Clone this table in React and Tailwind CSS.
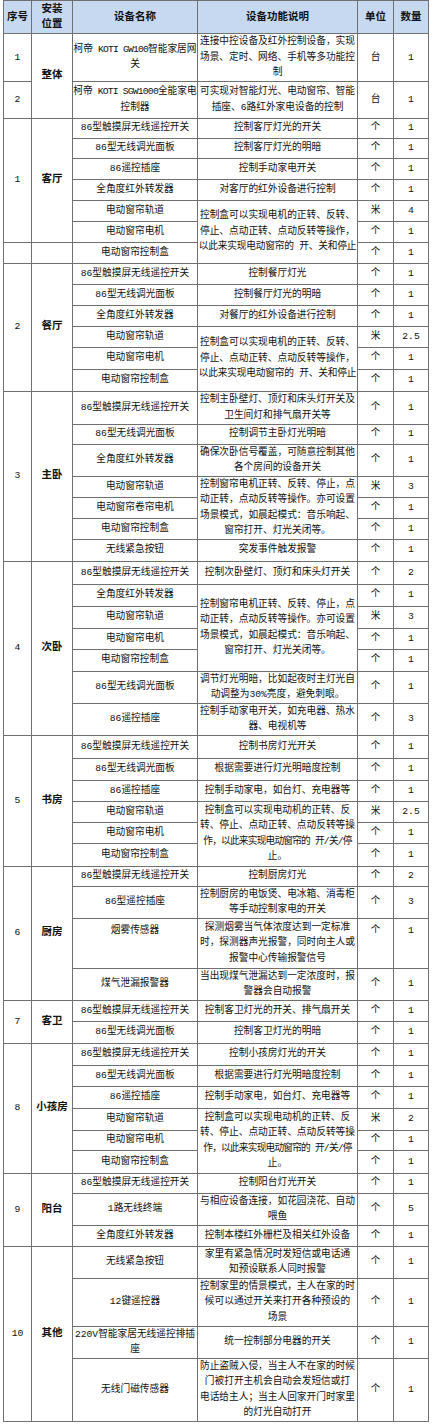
import React from 'react'

// 智能家居设备清单
const td = 'border border-[#707070] p-0 text-center align-middle whitespace-nowrap'

const KOTI1 = <>柯帝<span className="tracking-[-0.8px]"> KOTI GW100</span>智能家居网</>
const KOTI2 = <>柯帝<span className="tracking-[-0.8px]"> KOTI SGW1000</span>全能家电</>

const curtainA = [
  '控制盒可以实现电机的正转、反转、',
  '停止、点动正转、点动反转等操作，',
  <span className="tracking-[-0.2px]">以此来实现电动窗帘的 开、关和停止</span>
]
const curtainB = [
  '控制窗帘电机正转、反转、停止，点',
  '动正转，点动反转等操作。亦可设置',
  '场景模式，如晨起模式：音乐响起、',
  '窗帘打开、灯光关闭等。'
]
const curtainC = [
  '控制盒可以实现电动机的正转、反',
  '转、停止、点动正转、点动反转等操',
  <span className="tracking-[-0.8px]">作，以此来实现电动窗帘的 开/关/停</span>,
  '止。'
]

const rows = [
  // 整体
  { h: 47, seq: ['1'], loc: ['整体', 2], name: [KOTI1, '关'], desc: [['连接中控设备及红外控制设备，实现', '场景、定时、网络、手机等多功能控', '制']], u: '台' },
  { h: 37, seq: ['2'], name: [KOTI2, '控制器'], desc: [['可实现对智能灯光、电动窗帘、智能', '插座、6路红外家电设备的控制']], u: '台' },
  // 客厅
  { h: 20, seq: ['1', 6], loc: ['客厅', 6], name: ['86型触摸屏无线遥控开关'], desc: [['控制客厅灯光的开关']] },
  { h: 20, name: ['86型无线调光面板'], desc: [['控制客厅灯光的明暗']] },
  { h: 21, name: ['86遥控插座'], desc: [['控制手动家电开关']] },
  { h: 21, name: ['全角度红外转发器'], desc: [['对客厅的红外设备进行控制']] },
  { h: 21, name: ['电动窗帘轨道'], desc: [curtainA, 3], u: '米', q: '4' },
  { h: 21, name: ['电动窗帘电机'] },
  { h: 21, seq: [''], loc: [''], name: ['电动窗帘控制盒'] },
  // 餐厅
  { h: 21, seq: ['2', 6], loc: ['餐厅', 6], name: ['86型触摸屏无线遥控开关'], desc: [['控制餐厅灯光']] },
  { h: 21, name: ['86型无线调光面板'], desc: [['控制餐厅灯光的明暗']] },
  { h: 21, name: ['全角度红外转发器'], desc: [['对餐厅的红外设备进行控制']] },
  { h: 21, name: ['电动窗帘轨道'], desc: [curtainA, 3], u: '米', q: '2.5' },
  { h: 22, name: ['电动窗帘电机'] },
  { h: 22, name: ['电动窗帘控制盒'] },
  // 主卧
  { h: 33, seq: ['3', 7], loc: ['主卧', 7], name: ['86型触摸屏无线遥控开关'], desc: [['控制主卧壁灯、顶灯和床头灯开关及', '卫生间灯和排气扇开关等']] },
  { h: 20, name: ['86型无线调光面板'], desc: [['控制调节主卧灯光明暗']] },
  { h: 32, name: ['全角度红外转发器'], desc: [['确保次卧信号覆盖，可随意控制其他', '各个房间的设备开关']] },
  { h: 21, name: ['电动窗帘轨道'], desc: [curtainB, 3], u: '米', q: '3' },
  { h: 21, name: ['电动窗帘卷帘电机'] },
  { h: 21, name: ['电动窗帘控制盒'] },
  { h: 22, name: ['无线紧急按钮'], desc: [['突发事件触发报警']] },
  // 次卧
  { h: 23, seq: ['4', 7], loc: ['次卧', 7], name: ['86型触摸屏无线遥控开关'], desc: [['控制次卧壁灯、顶灯和床头灯开关']], q: '2' },
  { h: 22, name: ['全角度红外转发器'], desc: [curtainB, 4] },
  { h: 22, name: ['电动窗帘轨道'], u: '米', q: '3' },
  { h: 21, name: ['电动窗帘电机'] },
  { h: 22, name: ['电动窗帘控制盒'] },
  { h: 32, name: ['86型无线调光面板'], desc: [['调节灯光明暗，比如起夜时主灯光自', '动调整为30%亮度，避免刺眼。']] },
  { h: 30, name: ['86遥控插座'], desc: [['控制手动家电开关，如充电器、热水', '器、电视机等']], q: '3' },
  // 书房
  { h: 23, seq: ['5', 6], loc: ['书房', 6], name: ['86型触摸屏无线遥控开关'], desc: [['控制书房灯光开关']] },
  { h: 22, name: ['86型无线调光面板'], desc: [['根据需要进行灯光明暗度控制']] },
  { h: 21, name: ['86遥控插座'], desc: [['控制手动家电，如台灯、充电器等']] },
  { h: 21, name: ['电动窗帘轨道'], desc: [curtainC, 3], u: '米', q: '2.5' },
  { h: 21, name: ['电动窗帘电机'] },
  { h: 23, name: ['电动窗帘控制盒'] },
  // 厨房
  { h: 20, seq: ['6', 4], loc: ['厨房', 4], name: ['86型触摸屏无线遥控开关'], desc: [['控制厨房灯光']], q: '2' },
  { h: 32, name: ['86型遥控插座'], desc: [['控制厨房的电饭煲、电冰箱、消毒柜', '等手动控制家电的开关']], q: '3' },
  { h: 50, top: true, name: ['烟雾传感器'], desc: [['探测烟雾当气体浓度达到一定标准', '时，探测器声光报警，同时向主人或', '报警中心传输报警信号']] },
  { h: 32, name: ['煤气泄漏报警器'], desc: [['当出现煤气泄漏达到一定浓度时，报', '警器会自动报警']] },
  // 客卫
  { h: 21, seq: ['7', 2], loc: ['客卫', 2], name: ['86型触摸屏无线遥控开关'], desc: [['控制客卫灯光的开关、排气扇开关']] },
  { h: 22, name: ['86型无线调光面板'], desc: [['控制客卫灯光的明暗']] },
  // 小孩房
  { h: 22, seq: ['8', 6], loc: ['小孩房', 6], name: ['86型触摸屏无线遥控开关'], desc: [['控制小孩房灯光的开关']] },
  { h: 21, name: ['86型无线调光面板'], desc: [['根据需要进行灯光明暗度控制']] },
  { h: 22, name: ['86遥控插座'], desc: [['控制手动家电，如台灯、充电器等']] },
  { h: 22, name: ['电动窗帘轨道'], desc: [curtainC, 3], u: '米', q: '2' },
  { h: 20, name: ['电动窗帘电机'] },
  { h: 23, name: ['电动窗帘控制盒'] },
  // 阳台
  { h: 20, seq: ['9', 3], loc: ['阳台', 3], name: ['86型触摸屏无线遥控开关'], desc: [['控制阳台灯光开关']] },
  { h: 32, name: ['1路无线终端'], desc: [['与相应设备连接，如花园浇花、自动', '喂鱼']], q: '5' },
  { h: 21, name: ['全角度红外转发器'], desc: [['控制本楼红外栅栏及相关红外设备']] },
  // 其他
  { h: 32, seq: ['10', 4], loc: ['其他', 4], name: ['无线紧急按钮'], desc: [['家里有紧急情况时发短信或电话通', '知预设联系人同时报警']] },
  { h: 48, name: ['12键遥控器'], desc: [['控制家里的情景模式，主人在家的时', '候可以通过开关来打开各种预设的', '场景']] },
  { h: 32, name: ['220V智能家居无线遥控排插', '座'], desc: [['统一控制部分电器的开关']] },
  { h: 63, name: ['无线门磁传感器'], desc: [['防止盗贼入侵，当主人不在家的时候', '门被打开主机会自动会发短信或打', '电话给主人；当主人回家开门时家里', '的灯光自动打开']] }
]

const Lines = ({ lines }) => lines.map((l, i) => <div key={i}>{l}</div>)

const App = () => {
  return (
    <div className="w-[435px] min-h-[1424px] bg-white text-[#111] font-['Liberation_Mono','Noto_Sans_CJK_SC',monospace] text-[9.7px] leading-[15.5px]">
      <table className="ml-[3px] w-[425px] table-fixed border-collapse">
        <colgroup>
          <col className="w-[28px]" />
          <col className="w-[41px]" />
          <col className="w-[125px]" />
          <col className="w-[160px]" />
          <col className="w-[36px]" />
          <col className="w-[35px]" />
        </colgroup>
        <thead>
          <tr className="h-[33px] bg-[#c6d9f1] font-bold text-[10.5px] leading-[15px]">
            <th className={td}>序号</th>
            <th className={td}><div>安装</div><div>位置</div></th>
            <th className={td}>设备名称</th>
            <th className={td}>设备功能说明</th>
            <th className={td}>单位</th>
            <th className={td}>数量</th>
          </tr>
        </thead>
        <tbody>
          {rows.map((r, i) => {
            const cellTop = r.top ? 'align-top pt-[4px]' : ''
            return (
              <tr key={i} style={{ height: r.h }}>
                {r.seq && <td className={td} rowSpan={r.seq[1] || 1}>{r.seq[0]}</td>}
                {r.loc && <td className={`${td} font-bold text-[10.5px]`} rowSpan={r.loc[1] || 1}>{r.loc[0]}</td>}
                <td className={`${td} ${cellTop}`}><Lines lines={r.name} /></td>
                {r.desc && <td className={td} rowSpan={r.desc[1] || 1}><Lines lines={r.desc[0]} /></td>}
                <td className={`${td} ${cellTop}`}>{r.u || '个'}</td>
                <td className={`${td} ${cellTop}`}>{r.q || '1'}</td>
              </tr>
            )
          })}
        </tbody>
      </table>
    </div>
  )
}

export default App
